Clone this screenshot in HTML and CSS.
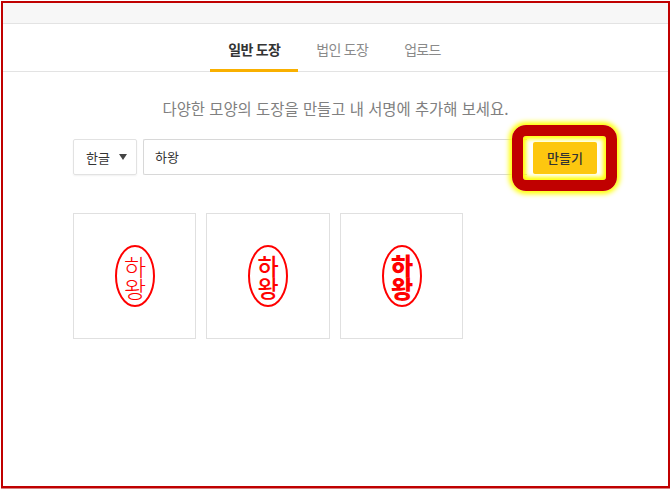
FILE: index.html
```html
<!DOCTYPE html>
<html lang="ko">
<head>
<meta charset="utf-8">
<title>도장 만들기</title>
<link rel="stylesheet" href="styles.css">
</head>
<body>
<div class="frame">
  <div class="topbar"></div>
  <nav class="tabs">
    <a class="tab active">일반 도장</a>
    <a class="tab">법인 도장</a>
    <a class="tab">업로드</a>
  </nav>
  <main class="content">
    <p class="desc">다양한 모양의 도장을 만들고 내 서명에 추가해 보세요.</p>
    <div class="form">
      <div class="select"><span>한글</span><i class="caret"></i></div>
      <div class="input">하왕</div>
      <div class="btn-wrap">
        <button class="make">만들기</button>
        <div class="highlight"></div>
      </div>
    </div>
    <div class="cards">
      <div class="card">
        <svg class="stamp" width="40" height="62" viewBox="0 0 40 62">
          <ellipse cx="20" cy="31" rx="19" ry="30" class="ring"/>
          <text class="glyph thin" transform="translate(20 31) scale(1.15 1.1)" text-anchor="middle">하</text>
          <text class="glyph thin" transform="translate(20 53) scale(1.15 1.1)" text-anchor="middle">왕</text>
        </svg>
      </div>
      <div class="card">
        <svg class="stamp" width="40" height="62" viewBox="0 0 40 62">
          <ellipse cx="20" cy="31" rx="19" ry="30" class="ring"/>
          <text class="glyph reg" x="20" y="30" text-anchor="middle">하</text>
          <text class="glyph reg" x="20" y="52" text-anchor="middle">왕</text>
        </svg>
      </div>
      <div class="card">
        <svg class="stamp" width="40" height="62" viewBox="0 0 40 62">
          <ellipse cx="20" cy="31" rx="19" ry="30" class="ring"/>
          <text class="glyph bold" x="20" y="30" text-anchor="middle">하</text>
          <text class="glyph bold" x="20" y="53" text-anchor="middle">왕</text>
        </svg>
      </div>
    </div>
  </main>
</div>
</body>
</html>
```
FILE: styles.css
```css
* { box-sizing: border-box; }
html, body { margin: 0; height: 100%; background: #fff; }
body {
  padding: 1px 1px 0 1px;
  font-family: "Noto Sans CJK KR", "Noto Sans", sans-serif;
  overflow: hidden;
}
.frame {
  width: 669px;
  height: 487px;
  border: 2px solid #c00000;
  box-shadow: 0 1px 0 #d98080;
  background: #fff;
}
.topbar {
  height: 21px;
  background: #f7f7f7;
  border-bottom: 1px solid #e3e3e3;
}
.tabs {
  display: flex;
  justify-content: center;
  height: 48px;
  padding-right: 2px;
  border-bottom: 1px solid #e3e3e3;
}
.tab {
  height: 48px;
  padding: 0 18px;
  font-size: 14px;
  letter-spacing: -.7px;
  line-height: 50px;
  color: #8a8a8a;
}
.tab.active {
  color: #333;
  font-weight: 700;
  border-bottom: 3px solid #f9b000;
}
.content { padding: 0 0 0 70px; }
.desc {
  margin: 25px 0 0;
  width: 525px;
  text-align: center;
  font-size: 15.4px;
  line-height: 22px;
  color: #808080;
}
.form {
  display: flex;
  margin-top: 20px;
  height: 36px;
}
.select {
  width: 64px;
  height: 36px;
  border: 1px solid #e2e2e2;
  border-radius: 2px;
  box-shadow: 0 1px 2px rgba(0,0,0,.06);
  display: flex;
  align-items: center;
  padding-left: 12px;
  gap: 9px;
  font-size: 13px;
  color: #333;
}
.caret {
  width: 0;
  height: 0;
  border-left: 4px solid transparent;
  border-right: 4px solid transparent;
  border-top: 6px solid #444;
}
.input {
  width: 384px;
  height: 36px;
  margin-left: 6px;
  border: 1px solid #d8d8d8;
  border-right: 0;
  border-radius: 2px 0 0 2px;
  padding-left: 11px;
  font-size: 13px;
  line-height: 33px;
  color: #333;
}
.btn-wrap {
  position: relative;
  margin-left: 6px;
  padding-top: 3px;
}
.make {
  display: block;
  width: 64px;
  height: 32px;
  border: 0;
  border-radius: 2px;
  background: #fdc70f;
  color: #333;
  font: 500 13px/32px "Noto Sans CJK KR", sans-serif;
  padding: 0;
}
.highlight {
  position: absolute;
  left: -21px;
  top: -14px;
  width: 105px;
  height: 66px;
  border: 11px solid #c00000;
  border-radius: 14px;
  box-shadow: 0 0 5px 3px #ffff00, inset 0 0 4px 3px #ffff00;
}
.cards {
  display: flex;
  gap: 10px;
  margin-top: 38px;
}
.card {
  width: 124px;
  height: 126px;
  border: 1px solid #e0e0e0;
  display: flex;
  align-items: center;
  justify-content: center;
}
.card:first-child { width: 123px; }
.card:last-child { width: 123px; }
.ring { fill: none; stroke: #f00; stroke-width: 2; }
.glyph {
  fill: #f00;
  font-family: "Noto Sans CJK KR", sans-serif;
  font-size: 21px;
}
.glyph.thin { font-weight: 300; font-size: 21px; }
.glyph.reg { font-weight: 500; font-size: 23px; }
.glyph.bold { font-weight: 900; font-size: 24px; }
```
